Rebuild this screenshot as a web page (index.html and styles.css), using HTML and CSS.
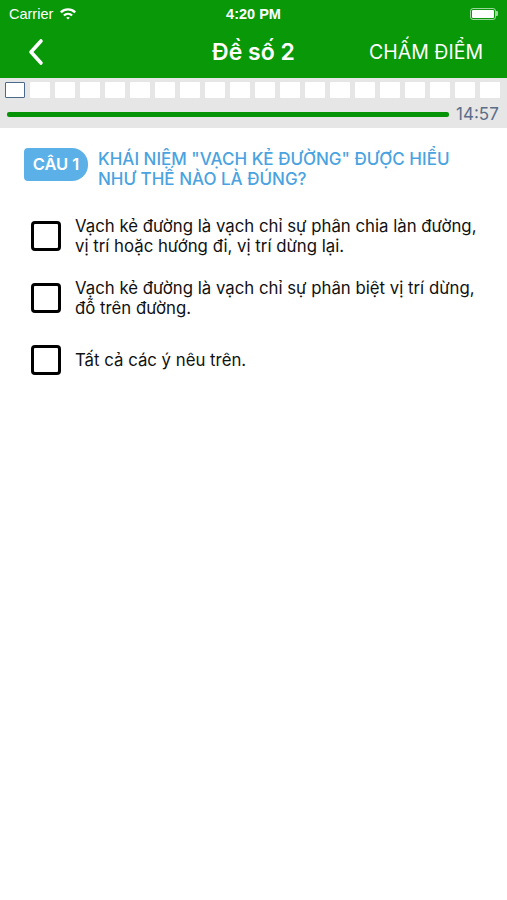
FILE: index.html
```html
<!DOCTYPE html>
<html lang="vi">
<head>
<meta charset="utf-8">
<link rel="stylesheet" href="styles.css">
</head>
<body>
<div class="header">
  <div class="status">
    <div class="status-left">Carrier
      <svg class="wifi" width="18" height="13" viewBox="0 0 18 13">
        <path d="M1 4.6 A11.5 11.5 0 0 1 17 4.6 L15.4 6.2 A9.2 9.2 0 0 0 2.6 6.2 Z" fill="#fff"/>
        <path d="M4.1 7.7 A7.1 7.1 0 0 1 13.9 7.7 L12.3 9.3 A4.8 4.8 0 0 0 5.7 9.3 Z" fill="#fff"/>
        <path d="M7.2 10.8 A2.6 2.6 0 0 1 10.8 10.8 L9 12.6 Z" fill="#fff"/>
      </svg>
    </div>
    <div class="status-time">4:20 PM</div>
    <div class="status-right">
      <div class="battery"><div class="battery-fill"></div></div>
      <div class="battery-tip"></div>
    </div>
  </div>
  <div class="nav">
    <svg class="back" width="18" height="28" viewBox="0 0 18 28">
      <path d="M14 3 L4 14 L14 25" fill="none" stroke="#fff" stroke-width="3.6" stroke-linecap="round" stroke-linejoin="round"/>
    </svg>
    <div class="title">Đề số 2</div>
    <div class="action">CHẤM ĐIỂM</div>
  </div>
</div>
<div class="progress-area">
  <div class="squares">
    <div class="sq active"></div><div class="sq"></div><div class="sq"></div><div class="sq"></div><div class="sq"></div>
    <div class="sq"></div><div class="sq"></div><div class="sq"></div><div class="sq"></div><div class="sq"></div>
    <div class="sq"></div><div class="sq"></div><div class="sq"></div><div class="sq"></div><div class="sq"></div>
    <div class="sq"></div><div class="sq"></div><div class="sq"></div><div class="sq"></div><div class="sq"></div>
  </div>
  <div class="timer-row">
    <div class="bar"></div>
    <div class="timer">14:57</div>
  </div>
</div>
<div class="question">
  <div class="badge">CÂU 1</div>
  <div class="qtext">KHÁI NIỆM "VẠCH KẺ ĐƯỜNG" ĐƯỢC HIỂU NHƯ THẾ NÀO LÀ ĐÚNG?</div>
</div>
<div class="answers">
  <div class="answer"><div class="box"></div><div class="atext">Vạch kẻ đường là vạch chỉ sự phân chia làn đường, vị trí hoặc hướng đi, vị trí dừng lại.</div></div>
  <div class="answer"><div class="box"></div><div class="atext">Vạch kẻ đường là vạch chỉ sự phân biệt vị trí dừng, đỗ trên đường.</div></div>
  <div class="answer"><div class="box"></div><div class="atext">Tất cả các ý nêu trên.</div></div>
</div>
</body>
</html>
```
FILE: styles.css
```css
* { box-sizing: border-box; }
body {
  margin: 0;
  font-family: "Liberation Sans", Arial, sans-serif;
  background: #fff;
  width: 507px;
}
.header {
  background: #089808;
  color: #fff;
  height: 78px;
  display: flex;
  flex-direction: column;
}
.status {
  height: 27px;
  display: flex;
  align-items: center;
  justify-content: space-between;
  padding: 0 9px;
  position: relative;
  font-size: 14.5px;
}
.status-left { display: flex; align-items: center; gap: 6px; }
.status-time {
  position: absolute;
  left: 0; right: 0;
  text-align: center;
  font-weight: bold;
  font-size: 14.5px;
}
.status-right { display: flex; align-items: center; }
.battery {
  width: 26px; height: 12px;
  border: 1.5px solid rgba(255,255,255,0.6);
  border-radius: 3px;
  padding: 1px;
}
.battery-fill { width: 100%; height: 100%; background: #fff; border-radius: 1px; }
.battery-tip { width: 2px; height: 5px; background: rgba(255,255,255,0.6); border-radius: 0 1px 1px 0; }
.nav {
  flex: 1;
  display: flex;
  align-items: center;
  position: relative;
  padding: 0 24px 2px 27px;
  justify-content: space-between;
  font-family: Inter, "Liberation Sans", sans-serif;
}
.title {
  position: absolute;
  left: 0; right: 0;
  text-align: center;
  font-weight: 600;
  font-size: 23px;
  pointer-events: none;
}
.action { font-size: 19.5px; }
.progress-area {
  background: #e6e6e6;
  height: 50px;
  padding: 4px 6px 0 5px;
}
.squares { display: flex; gap: 5px; }
.sq {
  width: 20px; height: 16px;
  background: #fff;
  border-radius: 1px;
}
.sq.active { border: 1.5px solid #4a6a8c; }
.timer-row {
  display: flex;
  align-items: center;
  margin-top: 6px;
  padding-left: 2px;
}
.bar {
  width: 442px;
  height: 5px;
  background: #079307;
  border-radius: 2px;
}
.timer {
  margin-left: 7px;
  font-size: 17px;
  font-family: Inter, "Liberation Sans", sans-serif;
  color: #5b6d89;
}
.question {
  display: flex;
  align-items: flex-start;
  padding: 20px 20px 0 24px;
  gap: 10px;
  font-family: Inter, "Liberation Sans", sans-serif;
}
.badge {
  background: #5bb1e7;
  color: #fff;
  font-weight: 600;
  font-size: 16.5px;
  height: 33px;
  line-height: 33px;
  text-align: center;
  width: 64px;
  border-radius: 4px 16px 16px 4px;
  flex: none;
}
.qtext {
  color: #4aa3e0;
  font-size: 17px;
  font-weight: 500;
  line-height: 20px;
  padding-top: 1px;
  width: 380px;
}
.answers {
  padding: 27px 20px 0 31px;
  display: flex;
  flex-direction: column;
  gap: 22px;
  font-family: Inter, "Liberation Sans", sans-serif;
}
.answer {
  display: flex;
  align-items: center;
  gap: 14px;
  min-height: 40px;
}
.box {
  width: 30px; height: 30px;
  border: 3.5px solid #000;
  border-radius: 4px;
  flex: none;
}
.atext {
  font-size: 16.8px;
  line-height: 20px;
  color: #111;
  max-width: 414px;
}
```
